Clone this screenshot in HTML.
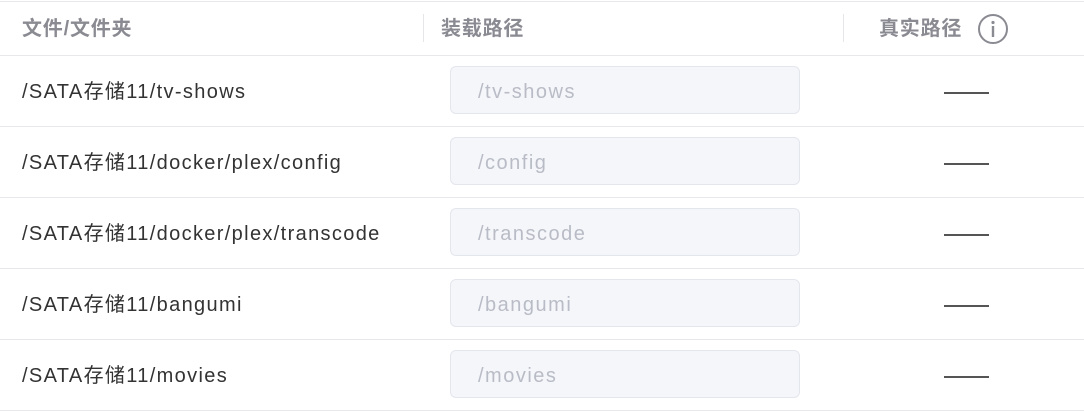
<!DOCTYPE html>
<html><head><meta charset="utf-8"><style>
body{margin:0;width:1084px;height:412px;background:#fff;font-family:"Liberation Sans","Noto Sans CJK SC",sans-serif;overflow:hidden;position:relative}
.hl{position:absolute;left:0;width:1084px;height:1px;background:#e8e8ec}
.h{position:absolute;top:14px;font-size:20px;font-weight:bold;color:#8a8a92;letter-spacing:0.8px;line-height:30px}
.vd{position:absolute;top:14px;width:1px;height:28px;background:#e6e6ea}
.r{position:absolute;left:22px;font-size:20px;color:#333;line-height:24px;letter-spacing:1.35px}
.in{position:absolute;left:450px;width:348px;height:46px;border:1px solid #e4e6ee;background:#f5f6fa;border-radius:6px;box-sizing:content-box}
.in span{position:absolute;left:27px;top:13px;font-size:20px;color:#b9bcc6;line-height:24px;letter-spacing:1.5px}
.d{position:absolute;left:944px;width:45px;height:2px;background:#555}
</style></head><body>
<div class="hl" style="top:1px"></div>
<div class="hl" style="top:55px"></div>
<div class="h" style="left:22px">文件/文件夹</div>
<div class="vd" style="left:423px"></div>
<div class="h" style="left:441px">装载路径</div>
<div class="vd" style="left:843px"></div>
<div class="h" style="left:879px">真实路径</div>
<svg style="position:absolute;left:977px;top:13px" width="32" height="32" viewBox="0 0 32 32"><circle cx="16" cy="16" r="14" fill="none" stroke="#8a8a92" stroke-width="2"/><circle cx="16" cy="9.5" r="1.6" fill="#8a8a92"/><rect x="14.8" y="13" width="2.4" height="11" fill="#8a8a92"/></svg>

<div class="r" style="top:80px">/SATA存储11/tv-shows</div>
<div class="in" style="top:66px"><span>/tv-shows</span></div>
<div class="d" style="top:92px"></div>
<div class="hl" style="top:126px"></div>

<div class="r" style="top:151px">/SATA存储11/docker/plex/config</div>
<div class="in" style="top:137px"><span>/config</span></div>
<div class="d" style="top:163px"></div>
<div class="hl" style="top:197px"></div>

<div class="r" style="top:222px">/SATA存储11/docker/plex/transcode</div>
<div class="in" style="top:208px"><span>/transcode</span></div>
<div class="d" style="top:234px"></div>
<div class="hl" style="top:268px"></div>

<div class="r" style="top:293px">/SATA存储11/bangumi</div>
<div class="in" style="top:279px"><span>/bangumi</span></div>
<div class="d" style="top:305px"></div>
<div class="hl" style="top:339px"></div>

<div class="r" style="top:364px">/SATA存储11/movies</div>
<div class="in" style="top:350px"><span>/movies</span></div>
<div class="d" style="top:376px"></div>
<div class="hl" style="top:410px"></div>
</body></html>
